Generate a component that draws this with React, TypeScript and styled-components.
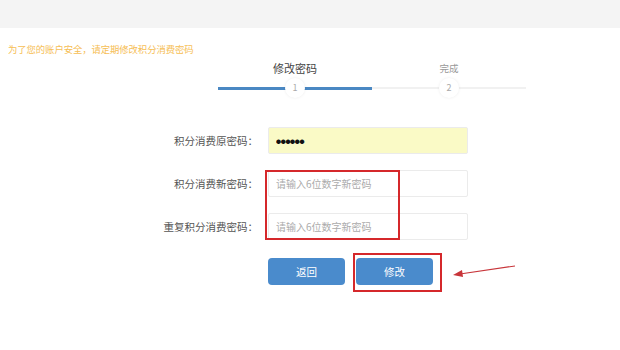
import React from 'react'
import styled, { createGlobalStyle } from 'styled-components'

const GlobalStyle = createGlobalStyle`
  body {
    margin: 0;
    background: #fff;
    font-family: "Noto Sans CJK SC", "Noto Sans", sans-serif;
  }
`

const Page = styled.div`
  position: relative;
  width: 620px;
  height: 350px;
  overflow: hidden;
`

const TopBar = styled.div`
  height: 28px;
  background: #f4f4f4;
`

const Notice = styled.div`
  margin-top: 15px;
  padding-left: 8px;
  font-size: 9.4px;
  line-height: 12px;
  color: #f6be55;
  letter-spacing: -0.1px;
`

const Steps = styled.div`
  display: flex;
  margin: 6px 0 0 218px;
`

const Step = styled.div`
  width: 154px;
  display: flex;
  flex-direction: column;
  align-items: center;
`

const StepLabel = styled.div<{ $active?: boolean }>`
  font-size: ${p => (p.$active ? '11px' : '9.5px')};
  line-height: 14px;
  color: ${p => (p.$active ? '#444' : '#999')};
`

const StepBar = styled.div<{ $active?: boolean }>`
  position: relative;
  width: 100%;
  height: 16px;
  margin-top: 5px;
  display: flex;
  align-items: center;
  &::before {
    content: '';
    flex: 1;
    height: ${p => (p.$active ? '3px' : '2px')};
    background: ${p => (p.$active ? '#4a88c3' : '#f1f1f1')};
  }
`

const StepDot = styled.span`
  position: absolute;
  left: 50%;
  top: 0;
  transform: translateX(-50%);
  width: 16px;
  height: 16px;
  border-radius: 50%;
  background: #fff;
  box-shadow: 0 0 0 2px #fff, 0 0 3px 2px rgba(0, 0, 0, 0.08);
  font-size: 9px;
  line-height: 16px;
  text-align: center;
  color: #aaa;
`

const Form = styled.div`
  position: relative;
  margin-top: 31px;
  display: grid;
  grid-template-columns: 258px 200px;
  column-gap: 10px;
  row-gap: 16px;
`

const Label = styled.label`
  text-align: right;
  font-size: 10.5px;
  line-height: 27px;
  color: #555;
`

const Input = styled.input<{ $filled?: boolean }>`
  box-sizing: border-box;
  width: 200px;
  height: 27px;
  margin: 0;
  padding: 0 7px;
  border: 1px solid #ebebeb;
  border-radius: 2px;
  background: ${p => (p.$filled ? '#fafac6' : '#fff')};
  font-family: inherit;
  font-size: ${p => (p.$filled ? '5px' : '10px')};
  letter-spacing: ${p => (p.$filled ? '-0.3px' : '0')};
  color: #111;
  outline: none;
  &::placeholder {
    color: #ababab;
  }
`

const Actions = styled.div`
  position: relative;
  display: flex;
  gap: 11px;
  margin: 18px 0 0 268px;
`

const Button = styled.button`
  width: 77px;
  height: 27px;
  border: none;
  border-radius: 4px;
  background: #4a8bcc;
  color: #fff;
  font-family: inherit;
  font-size: 10.5px;
`

const Highlight = styled.div<{ $left: number; $top: number; $w: number; $h: number }>`
  position: absolute;
  left: ${p => p.$left}px;
  top: ${p => p.$top}px;
  width: ${p => p.$w}px;
  height: ${p => p.$h}px;
  box-sizing: border-box;
  border: 2px solid #d5282b;
  pointer-events: none;
`

const Arrow = styled.svg`
  position: absolute;
  left: 450px;
  top: 260px;
`

export default function App() {
  return (
    <Page>
      <GlobalStyle />
      <TopBar />
      <Notice>为了您的账户安全，请定期修改积分消费密码</Notice>
      <Steps>
        <Step>
          <StepLabel $active>修改密码</StepLabel>
          <StepBar $active>
            <StepDot>1</StepDot>
          </StepBar>
        </Step>
        <Step>
          <StepLabel>完成</StepLabel>
          <StepBar>
            <StepDot>2</StepDot>
          </StepBar>
        </Step>
      </Steps>
      <Form>
        <Label>积分消费原密码：</Label>
        <Input $filled type="text" readOnly value="●●●●●●" />
        <Label>积分消费新密码：</Label>
        <Input type="password" placeholder="请输入6位数字新密码" />
        <Label>重复积分消费密码：</Label>
        <Input type="password" placeholder="请输入6位数字新密码" />
        <Highlight $left={265} $top={43} $w={135} $h={70} />
      </Form>
      <Actions>
        <Button>返回</Button>
        <Button>修改</Button>
        <Highlight $left={85} $top={-5} $w={89} $h={39} />
      </Actions>
      <Arrow width="70" height="20" viewBox="0 0 70 20">
        <line x1="65" y1="6" x2="10" y2="14" stroke="#c8353a" strokeWidth="1.2" />
        <polygon points="3,15 12,10 13,17" fill="#c8353a" />
      </Arrow>
    </Page>
  )
}
